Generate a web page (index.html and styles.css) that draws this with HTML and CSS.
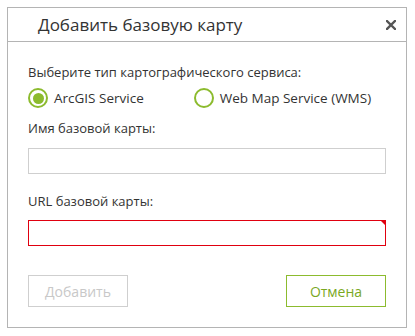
FILE: index.html
```html
<!DOCTYPE html>
<html lang="ru">

<head>
  <meta charset="UTF-8">
  <meta name="viewport" content="width=device-width, initial-scale=1.0">
  <title>Добавить базовую карту</title>
  <link rel="stylesheet" href="styles.css">
</head>

<body>
  <div class="dialog">
    <div class="dialog-header">
      <h1 class="dialog-title">Добавить базовую карту</h1>
      <svg class="dialog-close" width="10" height="10" viewBox="0 0 10 10">
        <path d="M1 1 L9 9 M9 1 L1 9" stroke="#555" stroke-width="2.4" stroke-linecap="square" />
      </svg>
    </div>
    <form class="dialog-body" action="#">
      <p class="field-label">Выберите тип картографического сервиса:</p>
      <div class="radio-group">
        <label class="radio">
          <span class="radio-mark checked"></span>
          <span>ArcGIS Service</span>
        </label>
        <label class="radio radio-wms">
          <span class="radio-mark"></span>
          <span>Web Map Service (WMS)</span>
        </label>
      </div>
      <p class="field-label">Имя базовой карты:</p>
      <input class="text-field" type="text" name="Name">
      <p class="field-label url-label">URL базовой карты:</p>
      <div class="required-wrap">
        <input class="text-field invalid" type="text" name="Url">
        <span class="required-flag"></span>
      </div>
      <div class="buttons">
        <button class="btn btn-disabled" type="submit" disabled>Добавить</button>
        <button class="btn btn-cancel" type="button">Отмена</button>
      </div>
    </form>
  </div>
</body>

</html>
```

FILE: styles.css
```css
* {
  box-sizing: border-box;
}

body {
  margin: 0;
  background: #fff;
  font-family: "Open Sans", "Noto Sans", sans-serif;
  color: #333;
}

.dialog {
  width: 400px;
  height: 321px;
  margin: 7px 0 0 7px;
  border: 1px solid #b4b4b4;
  display: flex;
  flex-direction: column;
}

.dialog-header {
  display: flex;
  align-items: center;
  justify-content: space-between;
  height: 34px;
  border-bottom: 1px solid #b4b4b4;
  padding: 0 10px 0 30px;
}

.dialog-title {
  margin: 0;
  font-size: 17px;
  font-weight: normal;
  color: #333;
}

.dialog-close {
  display: block;
}

.dialog-body {
  padding: 20px 20px 0 20px;
  flex: 1;
  display: flex;
  flex-direction: column;
}

.field-label {
  margin: 0;
  font-size: 13px;
  line-height: 20px;
}

.radio-group {
  display: flex;
  height: 32px;
  margin-bottom: 4px;
}

.radio {
  display: flex;
  align-items: center;
  gap: 6px;
  font-size: 13.5px;
  white-space: nowrap;
  flex-shrink: 0;
}

.radio-wms {
  margin-left: 50px;
}

.radio-mark {
  width: 20px;
  height: 20px;
  border: 2px solid #8cbb2e;
  border-radius: 50%;
  display: flex;
  align-items: center;
  justify-content: center;
}

.radio-mark.checked::after {
  content: "";
  width: 11px;
  height: 11px;
  border-radius: 50%;
  background: #8cbb2e;
}

.text-field {
  display: block;
  width: 100%;
  height: 26px;
  margin-top: 10px;
  border: 1px solid #cfcfcf;
  outline: none;
  font-size: 14px;
  padding: 0 6px;
}

.url-label {
  margin-top: 17px;
}

.required-wrap {
  position: relative;
  margin-top: -1px;
}

.text-field.invalid {
  border-color: #e0000f;
}

.required-flag {
  position: absolute;
  top: 10px;
  right: 0;
  width: 0;
  height: 0;
  border-top: 6px solid #e0000f;
  border-left: 6px solid transparent;
}

.buttons {
  display: flex;
  justify-content: space-between;
  margin-top: 29px;
}

.btn {
  width: 100px;
  height: 32px;
  background: #fff;
  font-family: inherit;
  font-size: 14px;
}

.btn-disabled {
  border: 1px solid #cfcfcf;
  color: #c8c8c8;
}

.btn-cancel {
  border: 1px solid #8cbb2e;
  color: #7aa81f;
  cursor: pointer;
}
```
